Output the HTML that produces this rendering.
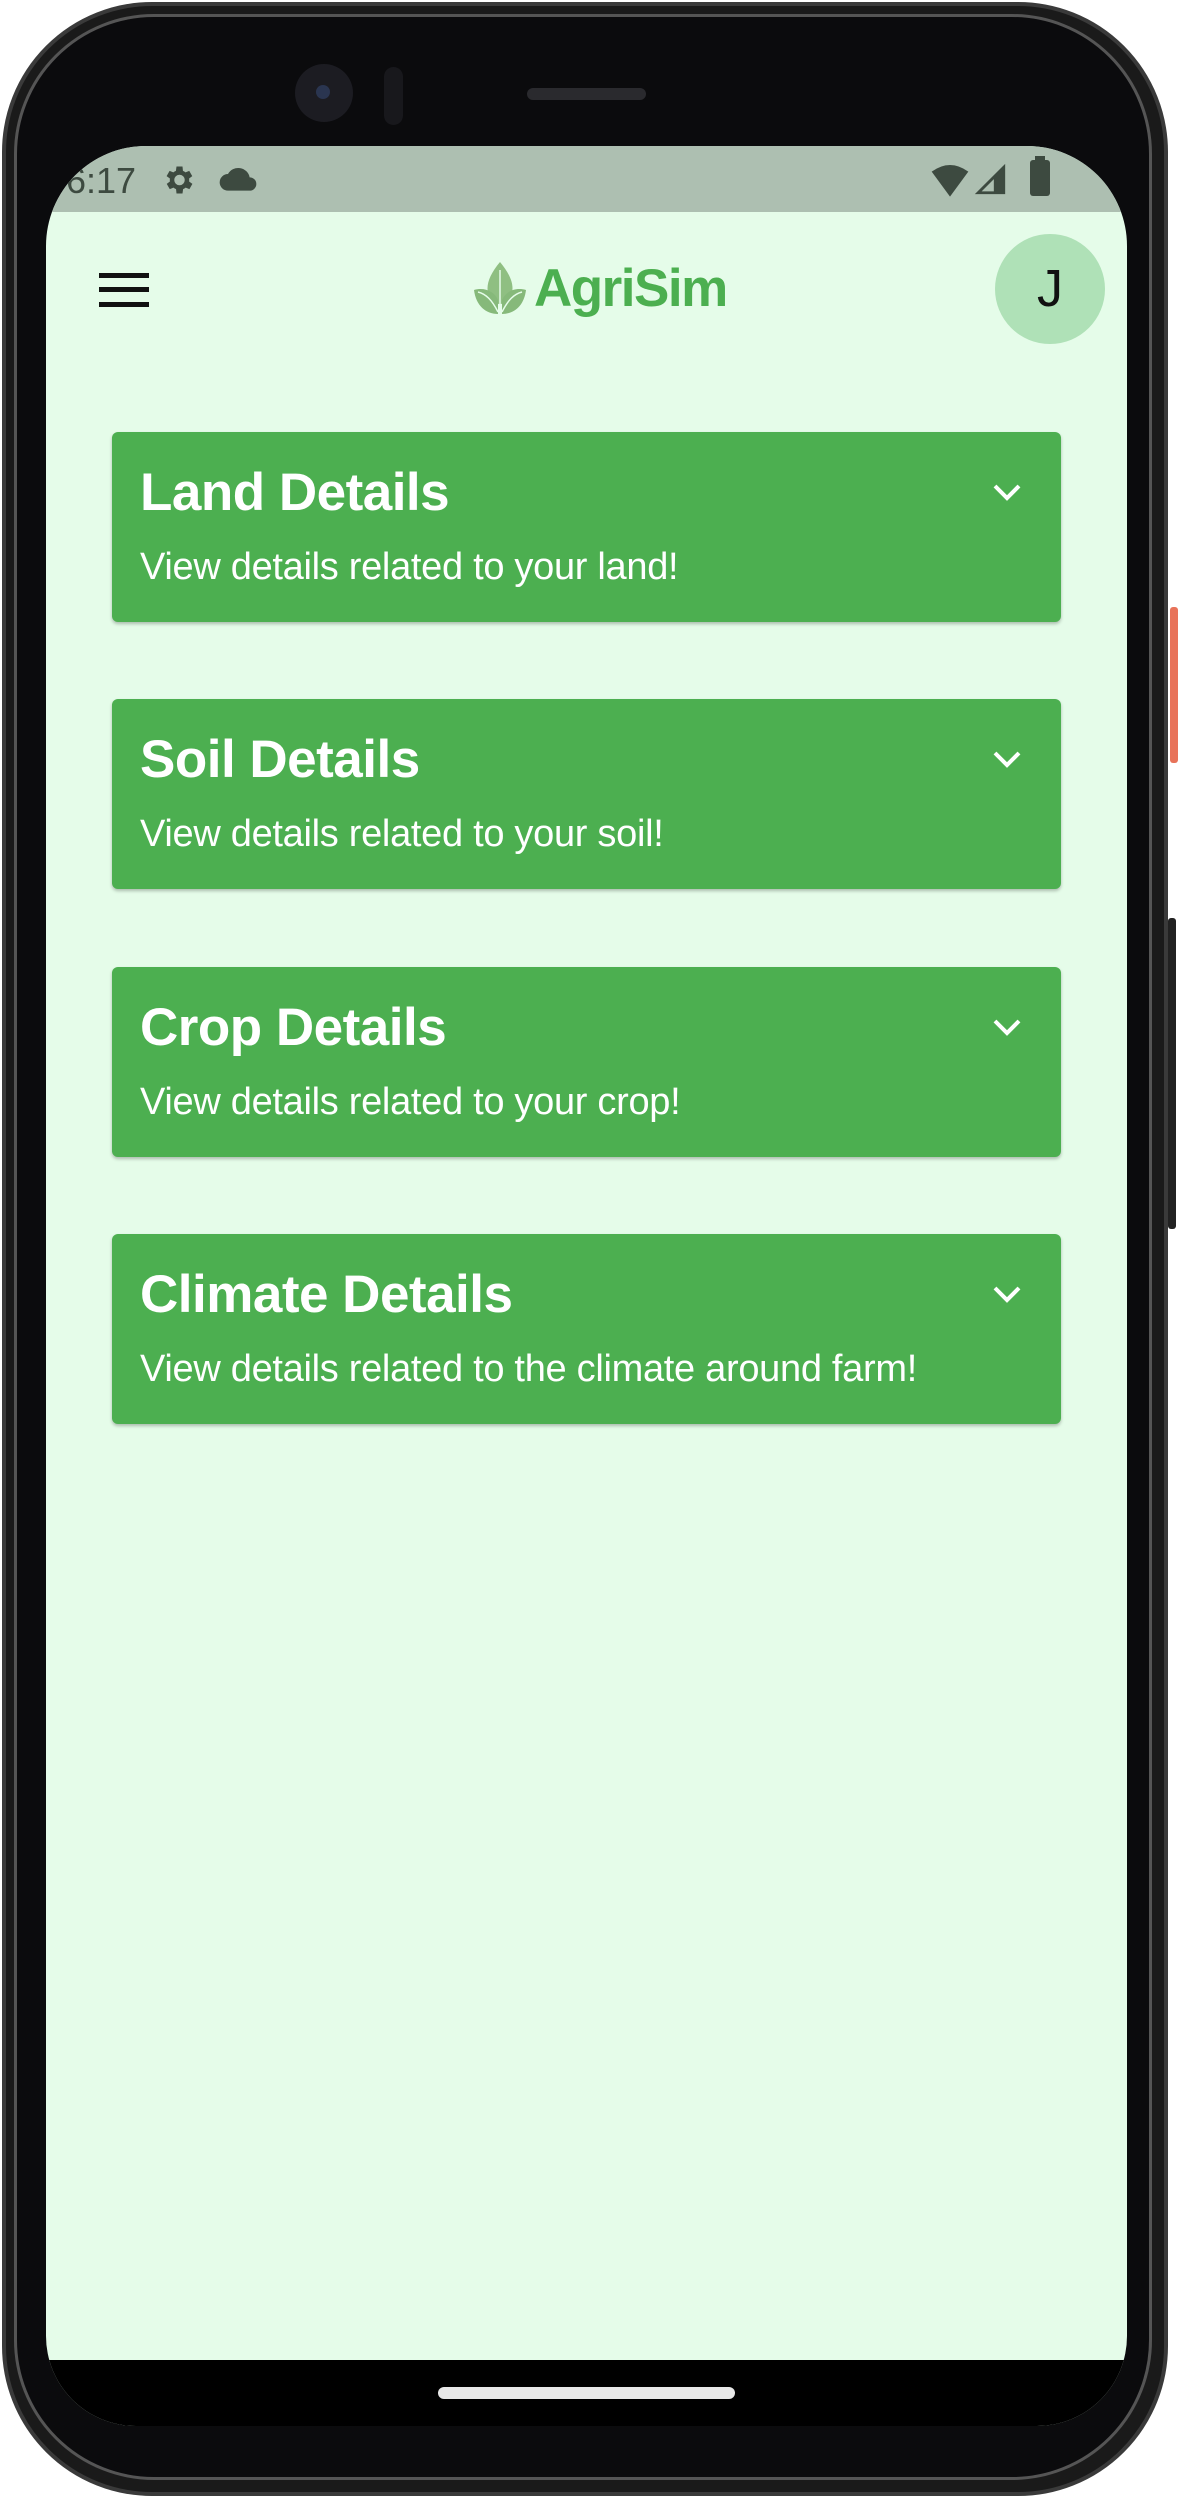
<!DOCTYPE html>
<html><head><meta charset="utf-8"><style>
*{margin:0;padding:0;box-sizing:border-box}
body{width:1178px;height:2498px;background:#fff;position:relative;overflow:hidden;font-family:"Liberation Sans",sans-serif}
.abs{position:absolute}
.phone{left:2px;top:2px;width:1166px;height:2494px;border-radius:150px;background:#1a1a1a;border:4px solid #3a3a3a}
.inner{left:14px;top:14px;width:1138px;height:2466px;border-radius:140px;background:#0b0b0d;border:3px solid #555}
.screen{left:46px;top:146px;width:1081px;height:2280px;background:#e5fce9;border-radius:100px 100px 90px 90px;overflow:hidden}
.status{left:0;top:0;width:1081px;height:66px;background:#adbfb1}
.nav{left:0;top:2214px;width:1081px;height:66px;background:#000}
.card{left:66px;width:949px;height:190px;background:#4caf50;border-radius:6px;box-shadow:0 2px 3px rgba(0,0,0,.25)}
.card h2{position:absolute;left:28px;top:30px;font-size:53px;font-weight:bold;color:#fff;letter-spacing:-0.5px}
.card p{position:absolute;left:28px;top:114px;font-size:38px;color:#fff;letter-spacing:-0.3px}
.card svg{position:absolute;left:879px;top:50px}
</style></head><body>
<div class="abs" style="left:1170px;top:607px;width:8px;height:156px;background:#e8735a;border-radius:3px"></div>
<div class="abs" style="left:1168px;top:918px;width:8px;height:311px;background:#222;border-radius:3px"></div>
<div class="abs phone"></div>
<div class="abs inner"></div>
<div class="abs" style="left:295px;top:64px;width:58px;height:58px;border-radius:50%;background:#1c1c22"></div>
<div class="abs" style="left:316px;top:85px;width:14px;height:14px;border-radius:50%;background:#2a3550"></div>
<div class="abs" style="left:384px;top:67px;width:19px;height:58px;border-radius:10px;background:#18181c"></div>
<div class="abs" style="left:527px;top:88px;width:119px;height:12px;border-radius:6px;background:#2a2a2e"></div>
<div class="abs screen">
 <div class="abs status">
  <div class="abs" style="left:20px;top:14px;font-size:36px;color:#3d4a40">6:17</div>
  <svg class="abs" style="left:114px;top:16px" width="36" height="36" viewBox="0 0 24 24"><path fill="#3d4a40" d="M19.4 13a7.5 7.5 0 000-2l2.1-1.6-2-3.5-2.5 1a7 7 0 00-1.7-1L15 3h-4l-.4 2.9a7 7 0 00-1.7 1l-2.5-1-2 3.5L6.6 11a7.5 7.5 0 000 2l-2.1 1.6 2 3.5 2.5-1a7 7 0 001.7 1L11 21h4l.4-2.9a7 7 0 001.7-1l2.5 1 2-3.5zM13 15.5a3.5 3.5 0 110-7 3.5 3.5 0 010 7z"/></svg>
  <svg class="abs" style="left:172px;top:18px" width="40" height="30" viewBox="0 0 24 18"><path fill="#3d4a40" d="M19 8a7 7 0 00-13-2A5 5 0 006 16h13a4 4 0 000-8z"/></svg>
  <svg class="abs" style="left:884px;top:14px" width="40" height="40" viewBox="0 0 24 24"><path fill="#3d4a40" d="M1 7q11-8 22 0L12 22z"/></svg>
  <svg class="abs" style="left:928px;top:16px" width="34" height="36" viewBox="0 0 24 24"><path fill="none" stroke="#3d4a40" stroke-width="2" d="M21 3L3 21h18z"/><path fill="#3d4a40" d="M14 10l7-7v18h-7z"/></svg>
  <div class="abs" style="left:984px;top:14px;width:20px;height:36px;background:#3d4a40;border-radius:3px"></div>
  <div class="abs" style="left:989px;top:10px;width:10px;height:5px;background:#3d4a40"></div>
 </div>
 <div class="abs" style="left:53px;top:127px;width:50px;height:5px;background:#111"></div>
 <div class="abs" style="left:53px;top:141px;width:50px;height:5px;background:#111"></div>
 <div class="abs" style="left:53px;top:156px;width:50px;height:5px;background:#111"></div>
 <svg class="abs" style="left:426px;top:114px" width="56" height="56" viewBox="0 0 56 56"><path fill="#8fbf82" d="M28 2C18 14 14 24 16 33c2 7 7 11 12 11s10-4 12-11C42 24 38 14 28 2z"/><path fill="#86b97a" d="M2 30c10-3 20 1 24 10v14C14 54 4 46 2 30z"/><path fill="#86b97a" d="M54 30c-10-3-20 1-24 10v14c12 0 22-8 24-24z"/><path stroke="#e5fce9" stroke-width="1.5" fill="none" d="M28 10v34M6 32c8 2 14 8 20 20M50 32c-8 2-14 8-20 20"/></svg>
 <div class="abs" style="left:488px;top:112px;font-size:53px;font-weight:bold;color:#4caf50;letter-spacing:-1.5px">AgriSim</div>
 <div class="abs" style="left:949px;top:88px;width:110px;height:110px;border-radius:50%;background:#afe1b7;text-align:center;line-height:110px;font-size:52px;color:#111">J</div>
 <div class="abs card" style="top:286px"><h2>Land Details</h2><p>View details related to your land!</p><svg width="32" height="20" viewBox="0 0 32 20"><path d="M4 4l12 12L28 4" stroke="#fff" stroke-width="4" fill="none"/></svg></div>
 <div class="abs card" style="top:553px"><h2>Soil Details</h2><p>View details related to your soil!</p><svg width="32" height="20" viewBox="0 0 32 20"><path d="M4 4l12 12L28 4" stroke="#fff" stroke-width="4" fill="none"/></svg></div>
 <div class="abs card" style="top:821px"><h2>Crop Details</h2><p>View details related to your crop!</p><svg width="32" height="20" viewBox="0 0 32 20"><path d="M4 4l12 12L28 4" stroke="#fff" stroke-width="4" fill="none"/></svg></div>
 <div class="abs card" style="top:1088px"><h2>Climate Details</h2><p>View details related to the climate around farm!</p><svg width="32" height="20" viewBox="0 0 32 20"><path d="M4 4l12 12L28 4" stroke="#fff" stroke-width="4" fill="none"/></svg></div>
 <div class="abs nav"><div class="abs" style="left:392px;top:27px;width:297px;height:12px;border-radius:6px;background:#e8e8e8"></div></div>
</div>
</body></html>
